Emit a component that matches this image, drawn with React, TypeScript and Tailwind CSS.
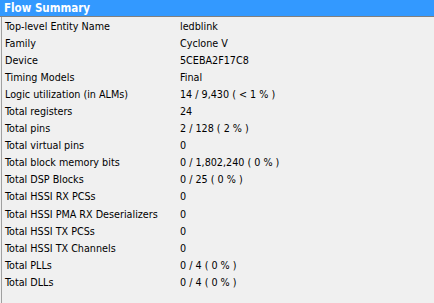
import React from "react";

const rows: [string, string][] = [
  ["Top-level Entity Name", "ledblink"],
  ["Family", "Cyclone V"],
  ["Device", "5CEBA2F17C8"],
  ["Timing Models", "Final"],
  ["Logic utilization (in ALMs)", "14 / 9,430 ( < 1 % )"],
  ["Total registers", "24"],
  ["Total pins", "2 / 128 ( 2 % )"],
  ["Total virtual pins", "0"],
  ["Total block memory bits", "0 / 1,802,240 ( 0 % )"],
  ["Total DSP Blocks", "0 / 25 ( 0 % )"],
  ["Total HSSI RX PCSs", "0"],
  ["Total HSSI PMA RX Deserializers", "0"],
  ["Total HSSI TX PCSs", "0"],
  ["Total HSSI TX Channels", "0"],
  ["Total PLLs", "0 / 4 ( 0 % )"],
  ["Total DLLs", "0 / 4 ( 0 % )"],
];

export default function App() {
  return (
    <div
      className="w-[434px] h-[303px] bg-[#f0f0f0] flex flex-col overflow-hidden"
      style={{ fontFamily: "'DejaVu Sans Condensed', 'DejaVu Sans', sans-serif" }}
    >
      <div className="h-[16px] bg-[#3399ff] text-white font-bold text-[11.5px] leading-[16px] pl-[4px] whitespace-nowrap">
        Flow Summary
      </div>
      <div className="h-[1px] bg-[#808080]" />
      <div className="flex-1 border-l border-[#a0a0a0] ml-[1px] pt-[1px]">
        {rows.map(([k, v]) => (
          <div key={k} className="flex h-[17.1px] items-center text-[10.7px] text-black whitespace-nowrap">
            <div className="w-[178px] pl-[3px]">{k}</div>
            <div>{v}</div>
          </div>
        ))}
      </div>
    </div>
  );
}
